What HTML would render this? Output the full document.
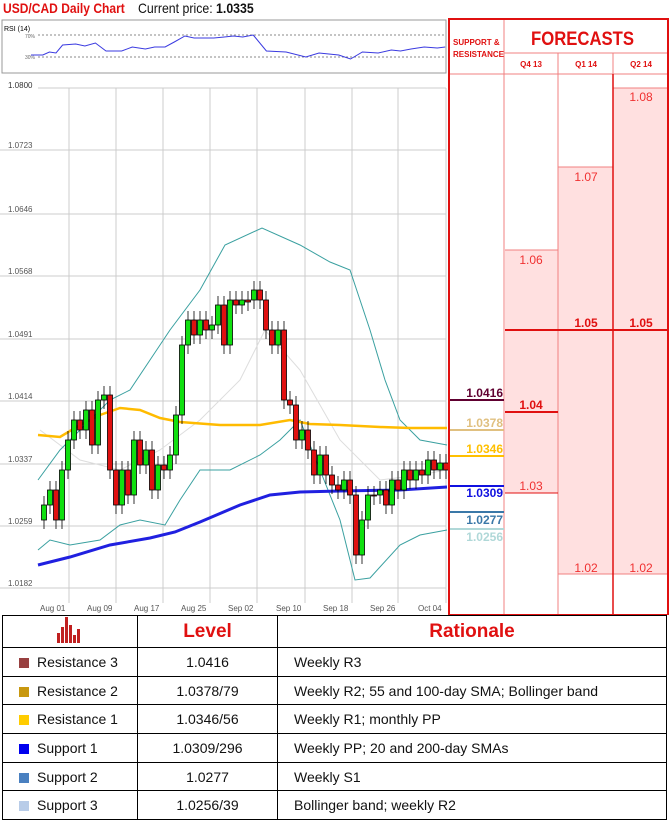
<!DOCTYPE html>
<html><head><meta charset="utf-8"><style>
body{margin:0;width:671px;height:823px;background:#fff;font-family:"Liberation Sans",sans-serif;position:relative;overflow:hidden}
.a{position:absolute}
table{border-collapse:collapse;position:absolute;left:2px;top:615px;width:665px}
td{border:1.5px solid #000;height:27.7px;font-size:14px;padding:0;color:#111}
.sq{display:inline-block;width:10px;height:10px;margin:0 8px 0 16px;vertical-align:-1px}
</style></head><body>
<div class="a" style="left:3px;top:0;font-size:14px;font-weight:bold;color:#e01010;transform:scaleX(0.86);transform-origin:0 0;white-space:nowrap">USD/CAD Daily Chart</div>
<div class="a" style="left:138px;top:0;font-size:14px;color:#111;transform:scaleX(0.88);transform-origin:0 0;white-space:nowrap">Current price: <b>1.0335</b></div>
<svg class="a" style="left:0;top:0" width="450" height="615">
<rect x="2" y="20" width="444" height="53" fill="#fff" stroke="#999"/>
<text x="4" y="31" font-size="7" font-family="Liberation Sans">RSI (14)</text>
<text x="25" y="38" font-size="5" fill="#666">70%</text><text x="25" y="59" font-size="5" fill="#666">30%</text>
<line x1="38" y1="35" x2="446" y2="35" stroke="#888" stroke-dasharray="2,2"/>
<line x1="38" y1="57" x2="446" y2="57" stroke="#888" stroke-dasharray="2,2"/>
<polyline id="rsi" fill="none" stroke="#3a3ae0" stroke-width="1" points=""/>
<text x="8" y="88" font-size="8" fill="#333">1.0800</text>
<g stroke="#ccc" stroke-width="1">
<line x1="38" y1="88" x2="446" y2="88"/><line x1="0" y1="150" x2="446" y2="150"/><line x1="0" y1="214" x2="446" y2="214"/><line x1="0" y1="276" x2="446" y2="276"/><line x1="0" y1="339" x2="446" y2="339"/><line x1="0" y1="401" x2="446" y2="401"/><line x1="0" y1="464" x2="446" y2="464"/><line x1="0" y1="526" x2="446" y2="526"/><line x1="0" y1="588" x2="446" y2="588"/>
<line x1="69" y1="88" x2="69" y2="603"/><line x1="116" y1="88" x2="116" y2="603"/><line x1="163" y1="88" x2="163" y2="603"/><line x1="210" y1="88" x2="210" y2="603"/><line x1="257" y1="88" x2="257" y2="603"/><line x1="305" y1="88" x2="305" y2="603"/><line x1="352" y1="88" x2="352" y2="603"/><line x1="398" y1="88" x2="398" y2="603"/><line x1="446" y1="88" x2="446" y2="603"/>
</g>
<g font-size="8" fill="#555">
<text x="8" y="148">1.0723</text><text x="8" y="212">1.0646</text><text x="8" y="274">1.0568</text><text x="8" y="337">1.0491</text><text x="8" y="399">1.0414</text><text x="8" y="462">1.0337</text><text x="8" y="524">1.0259</text><text x="8" y="586">1.0182</text>
<text x="40" y="611">Aug 01</text><text x="87" y="611">Aug 09</text><text x="134" y="611">Aug 17</text><text x="181" y="611">Aug 25</text><text x="228" y="611">Sep 02</text><text x="276" y="611">Sep 10</text><text x="323" y="611">Sep 18</text><text x="370" y="611">Sep 26</text><text x="418" y="611">Oct 04</text>
</g>
<polyline fill="none" stroke="#ddd" points="40,430 80,460 120,470 160,450 200,420 240,380 265,330 300,370 340,440 380,480 420,475 446,470"/>
<polyline fill="none" stroke="#3aa0a0" points="38,480 60,450 80,430 110,400 130,390 150,360 170,330 200,290 225,245 262,228 300,245 330,262 350,270 370,330 385,380 400,420 420,440 447,445"/>
<polyline fill="none" stroke="#3aa0a0" points="38,550 50,540 70,545 100,540 120,525 140,520 165,525 180,500 200,470 230,470 260,455 280,440 300,420 320,470 340,520 355,580 370,578 400,545 420,535 447,530"/>
<polyline fill="none" stroke="#ffbb00" stroke-width="2.5" points="38,435 60,437 80,425 100,415 120,408 140,410 160,418 180,422 220,425 260,425 290,420 310,424 340,425 380,427 410,428 447,428"/>
<polyline fill="none" stroke="#2020e0" stroke-width="3" points="38,565 70,557 110,545 150,538 175,532 200,522 240,505 270,495 300,492 340,491 400,490 447,487"/>
<g id="c" stroke="#000" stroke-width="0.8"></g>
</svg>
<script>
var r=[[31,55],[40,55],[45,52],[50,53],[55,45],[65,44],[72,46],[80,43],[88,51],[100,51],[108,47],[118,49],[125,47],[133,47],[140,42],[148,36],[155,38],[170,38],[178,37],[185,36],[192,37],[200,35],[210,51],[225,52],[240,57],[250,53],[265,55],[274,59],[283,52],[295,53],[305,50],[312,51],[320,49],[330,47],[340,48],[346,47]];
document.getElementById('rsi').setAttribute('points',r.map(function(p){return (31+(p[0]-31)*1.315).toFixed(1)+','+p[1]}).join(' '));
var d=[[44,520,505],[50,505,490],[56,490,520],[62,520,470],[68,470,440],[74,440,420],[80,420,430],[86,430,410],[92,410,445],[98,445,400],[104,400,395],[110,395,470],[116,470,505],[122,505,470],[128,470,495],[134,495,440],[140,440,465],[146,465,450],[152,450,490],[158,490,465],[164,465,470],[170,470,455],[176,455,415],[182,415,345],[188,345,320],[194,320,335],[200,335,320],[206,320,330],[212,330,325],[218,325,305],[224,305,345],[230,345,300],[236,300,305],[242,305,300],[248,300,302],[254,300,290],[260,290,300],[266,300,330],[272,330,345],[278,345,330],[284,330,400],[290,400,405],[296,405,440],[302,440,430],[308,430,450],[314,450,475],[320,475,455],[326,455,475],[332,475,485],[338,485,490],[344,490,480],[350,480,495],[356,495,555],[362,555,520],[368,520,495],[374,495,495],[380,495,490],[386,490,505],[392,505,480],[398,480,490],[404,490,470],[410,470,480],[416,480,470],[422,470,475],[428,475,460],[434,460,470],[440,470,463],[446,463,470]];
var g=document.getElementById('c'),s='';
d.forEach(function(c){var t=Math.min(c[1],c[2]),b=Math.max(c[1],c[2]);if(b-t<1)b=t+1;
s+='<line x1="'+c[0]+'" y1="'+(t-9)+'" x2="'+c[0]+'" y2="'+(b+9)+'"/>';
s+='<rect x="'+(c[0]-2.5)+'" y="'+t+'" width="5" height="'+(b-t)+'" fill="'+(c[2]<c[1]?'#10e010':'#e01010')+'"/>';});
g.innerHTML=s;
</script>
<svg class="a" style="left:448px;top:18px" width="223" height="597">
<rect x="57" y="232" width="53" height="243" fill="#ffe0e0"/>
<rect x="110" y="149" width="55" height="407" fill="#ffe0e0"/>
<rect x="165" y="70" width="55" height="486" fill="#ffe0e0"/>
<g stroke="#f08080" fill="none">
<line x1="56" y1="0" x2="56" y2="597"/><line x1="110" y1="35" x2="110" y2="597"/><line x1="165" y1="35" x2="165" y2="597"/>
<line x1="56" y1="35" x2="220" y2="35"/><line x1="1" y1="56" x2="220" y2="56"/>
<line x1="57" y1="232" x2="110" y2="232"/><line x1="110" y1="149" x2="165" y2="149"/><line x1="165" y1="70" x2="220" y2="70"/>
<line x1="110" y1="556" x2="220" y2="556"/>
</g>
<rect x="1" y="1" width="219" height="596" fill="none" stroke="#e01010" stroke-width="2"/>
<line x1="165" y1="56" x2="165" y2="597" stroke="#e01010" stroke-width="1.5"/>
<line x1="57" y1="394" x2="110" y2="394" stroke="#e01010" stroke-width="2"/>
<line x1="57" y1="312" x2="220" y2="312" stroke="#e01010" stroke-width="2"/>
<line x1="57" y1="475" x2="110" y2="475" stroke="#e01010" stroke-width="1"/>
<line x1="2" y1="382" x2="56" y2="382" stroke="#600030" stroke-width="2"/>
<line x1="2" y1="412" x2="56" y2="412" stroke="#e0c080" stroke-width="2"/>
<line x1="2" y1="438" x2="56" y2="438" stroke="#ffc000" stroke-width="2"/>
<line x1="2" y1="468" x2="56" y2="468" stroke="#1010e0" stroke-width="2"/>
<line x1="2" y1="494" x2="56" y2="494" stroke="#3a78a8" stroke-width="2"/>
<line x1="2" y1="511" x2="56" y2="511" stroke="#b0d8d8" stroke-width="2"/>
<g font-family="Liberation Sans" fill="#e01010">
<text x="5" y="27" font-size="8" font-weight="bold">SUPPORT &amp;</text><text x="5" y="39" font-size="8" font-weight="bold">RESISTANCE</text>
<text x="83" y="27" font-size="19" font-weight="bold" textLength="103" lengthAdjust="spacingAndGlyphs">FORECASTS</text>
<g font-size="8" font-weight="bold" text-anchor="middle"><text x="83" y="49">Q4 13</text><text x="138" y="49">Q1 14</text><text x="193" y="49">Q2 14</text></g>
<g font-size="12" text-anchor="middle" fill="#f03030"><text x="193" y="83">1.08</text><text x="138" y="163">1.07</text><text x="83" y="246">1.06</text><text x="83" y="472">1.03</text><text x="138" y="554">1.02</text><text x="193" y="554">1.02</text></g>
<g font-size="12" font-weight="bold" text-anchor="middle"><text x="83" y="391">1.04</text><text x="138" y="309">1.05</text><text x="193" y="309">1.05</text></g>
</g>
<g font-family="Liberation Sans" font-size="12" font-weight="bold" text-anchor="end">
<text x="55" y="379" fill="#600030">1.0416</text><text x="55" y="409" fill="#e0c080">1.0378</text><text x="55" y="435" fill="#ffc000">1.0346</text><text x="55" y="479" fill="#1010e0">1.0309</text><text x="55" y="506" fill="#3a78a8">1.0277</text><text x="55" y="523" fill="#b0d8d8">1.0256</text>
</g>
</svg>
<table>
<tr style="height:32px"><td style="width:134px;text-align:center"><svg width="26" height="26" viewBox="0 0 26 26"><g fill="#c02020"><rect x="0" y="16" width="3" height="10"/><rect x="4" y="10" width="3" height="16"/><rect x="8" y="0" width="3" height="26"/><rect x="12" y="8" width="3" height="18"/><rect x="16" y="18" width="3" height="8"/><rect x="20" y="12" width="3" height="14"/></g></svg></td><td style="width:139px;text-align:center;color:#e01010;font-size:19px;font-weight:bold">Level</td><td style="text-align:center;color:#e01010;font-size:19px;font-weight:bold">Rationale</td></tr>
<tr><td><span class="sq" style="background:#984040"></span>Resistance 3</td><td style="text-align:center">1.0416</td><td style="padding-left:16px">Weekly R3</td></tr>
<tr><td><span class="sq" style="background:#c89810"></span>Resistance 2</td><td style="text-align:center">1.0378/79</td><td style="padding-left:16px">Weekly R2; 55 and 100-day SMA; Bollinger band</td></tr>
<tr><td><span class="sq" style="background:#ffcc00"></span>Resistance 1</td><td style="text-align:center">1.0346/56</td><td style="padding-left:16px">Weekly R1; monthly PP</td></tr>
<tr><td><span class="sq" style="background:#0000ee"></span>Support 1</td><td style="text-align:center">1.0309/296</td><td style="padding-left:16px">Weekly PP; 20 and 200-day SMAs</td></tr>
<tr><td><span class="sq" style="background:#4a80c0"></span>Support 2</td><td style="text-align:center">1.0277</td><td style="padding-left:16px">Weekly S1</td></tr>
<tr><td><span class="sq" style="background:#b8cce8"></span>Support 3</td><td style="text-align:center">1.0256/39</td><td style="padding-left:16px">Bollinger band; weekly R2</td></tr>
</table>
</body></html>
